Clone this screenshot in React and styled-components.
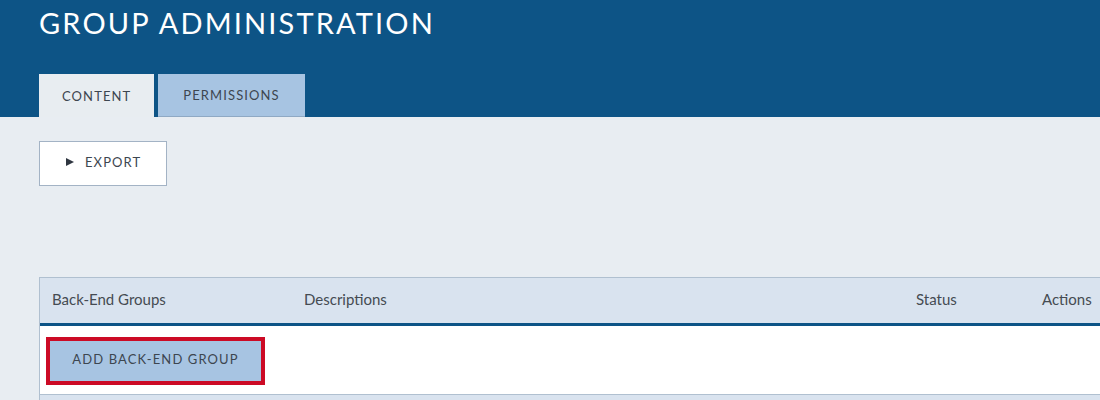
import styled, { createGlobalStyle } from "styled-components";

const Global = createGlobalStyle`
  body {
    margin: 0;
    background: #e8edf2;
    font-family: Lato, "Open Sans", sans-serif;
    overflow: hidden;
  }
`;

const Header = styled.header`
  background: #0d5486;
  height: 117px;
  padding: 0 39px;
  display: flex;
  flex-direction: column;
  justify-content: space-between;
`;

const Title = styled.h1`
  margin: 0;
  padding-top: 5px;
  color: #fff;
  font-weight: 400;
  font-size: 29px;
  letter-spacing: 2.15px;
  line-height: 36px;
`;

const Tabs = styled.nav`
  display: flex;
  gap: 4px;
`;

const Tab = styled.div`
  height: 43px;
  padding: 0 ${(p) => p.$pad}px;
  display: flex;
  align-items: center;
  font-size: 13px;
  letter-spacing: 1.1px;
  color: #3d4650;
  background: ${(p) => (p.$active ? "#e8edf1" : "#a7c4e2")};
  box-sizing: border-box;
  border-bottom: ${(p) => (p.$active ? "none" : "1px solid #8fa9c4")};
`;

const Main = styled.main`
  padding: 24px 0 0 39px;
`;

const ExportButton = styled.button`
  width: 128px;
  height: 45px;
  background: #fff;
  border: 1px solid #a3b3c5;
  display: flex;
  align-items: center;
  padding: 0 0 3px 26px;
  gap: 11px;
  font-family: inherit;
  font-size: 13px;
  letter-spacing: 1.1px;
  color: #3d4650;
`;

const Arrow = styled.span`
  width: 0;
  height: 0;
  border-top: 4px solid transparent;
  border-bottom: 4px solid transparent;
  border-left: 8px solid #2f3640;
`;

const Table = styled.div`
  margin-top: 91px;
  width: 1110px;
  border: 1px solid #b0c0d0;
  border-right: none;
`;

const HeadRow = styled.div`
  display: grid;
  grid-template-columns: 252px 612px 126px 1fr;
  height: 45px;
  box-sizing: border-box;
  padding-bottom: 3px;
  align-items: center;
  background: #d9e3ef;
  border-bottom: 3px solid #0d5486;
  font-size: 15px;
  color: #454b52;
  height: 48px;
`;

const Cell = styled.div`
  padding-left: 12px;
`;

const BodyRow = styled.div`
  background: #fff;
  height: 68px;
  display: flex;
  align-items: center;
  padding-left: 6px;
  border-bottom: 1px solid #b0c0d0;
`;

const AddButton = styled.button`
  width: 219px;
  height: 48px;
  background: #a7c4e2;
  border: 4px solid #cc0a25;
  padding: 0 0 4px;
  font-family: inherit;
  font-size: 13px;
  letter-spacing: 1.1px;
  color: #3d4650;
  margin-top: 1px;
`;

const FooterRow = styled.div`
  height: 20px;
  background: #d9e3ef;
`;

export default function App() {
  return (
    <>
      <Global />
      <Header>
        <Title>GROUP ADMINISTRATION</Title>
        <Tabs>
          <Tab $active $pad={23}>CONTENT</Tab>
          <Tab $pad={25}>PERMISSIONS</Tab>
        </Tabs>
      </Header>
      <Main>
        <ExportButton>
          <Arrow />
          EXPORT
        </ExportButton>
        <Table>
          <HeadRow>
            <Cell>Back-End Groups</Cell>
            <Cell>Descriptions</Cell>
            <Cell>Status</Cell>
            <Cell>Actions</Cell>
          </HeadRow>
          <BodyRow>
            <AddButton>ADD BACK-END GROUP</AddButton>
          </BodyRow>
          <FooterRow />
        </Table>
      </Main>
    </>
  );
}
